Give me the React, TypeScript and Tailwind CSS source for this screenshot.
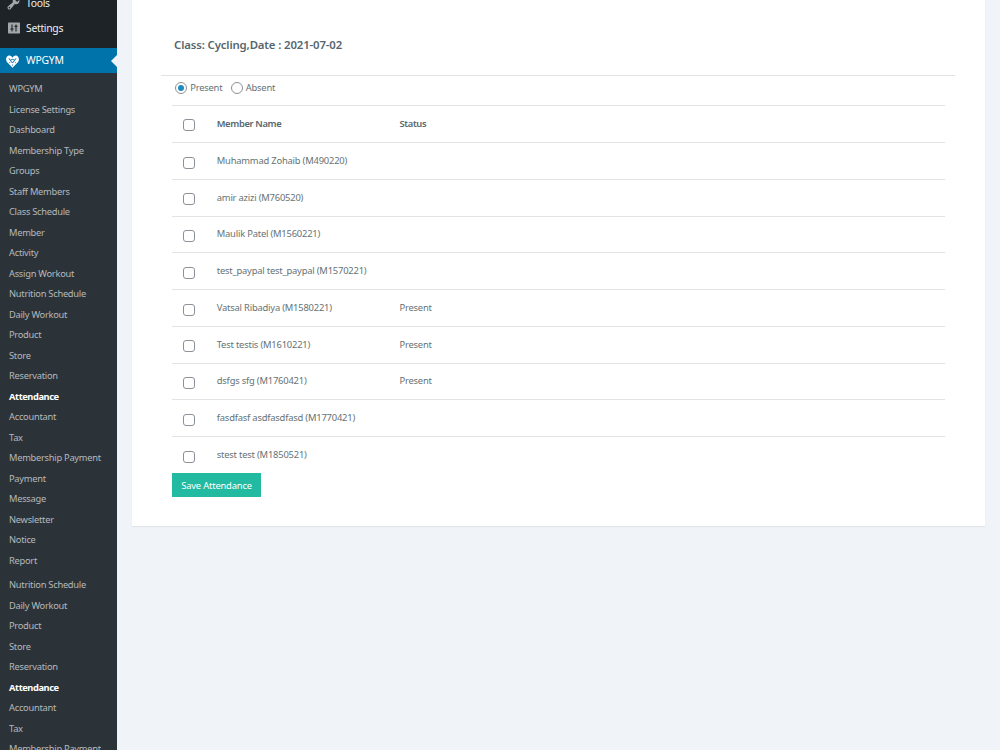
import React from "react";

const menu = ["WPGYM", "License Settings", "Dashboard", "Membership Type", "Groups", "Staff Members", "Class Schedule", "Member", "Activity", "Assign Workout", "Nutrition Schedule", "Daily Workout", "Product", "Store", "Reservation", "Attendance", "Accountant", "Tax", "Membership Payment", "Payment", "Message", "Newsletter", "Notice", "Report"];
const more = ["Nutrition Schedule", "Daily Workout", "Product", "Store", "Reservation", "Attendance", "Accountant", "Tax", "Membership Payment"];
const members = [
  ["Muhammad Zohaib (M490220)", ""],
  ["amir azizi (M760520)", ""],
  ["Maulik Patel (M1560221)", ""],
  ["test_paypal test_paypal (M1570221)", ""],
  ["Vatsal Ribadiya (M1580221)", "Present"],
  ["Test testis (M1610221)", "Present"],
  ["dsfgs sfg (M1760421)", "Present"],
  ["fasdfasf asdfasdfasd (M1770421)", ""],
  ["stest test (M1850521)", ""],
];

function Items({ items }: { items: string[] }) {
  return (
    <ul>
      {items.map((m) => (
        <li key={m} className="flex h-[20.5px] items-center pl-[9px] text-[9.3px]">
          <span className={m === "Attendance" ? "font-bold text-white tracking-[-0.42px]" : "text-[#b4b9be] tracking-[-0.26px]"}>{m}</span>
        </li>
      ))}
    </ul>
  );
}

function Box() {
  return <span className="ml-[11px] mt-[2.25px] size-[12px] shrink-0 rounded-[3px] border border-[#8c9199]" />;
}

function Row({ name, status, head }: { name: string; status: string; head?: boolean }) {
  return (
    <div className={`flex h-[36.75px] items-center border-t border-[#e2e3e4] ${head ? "font-semibold text-[#56666d] tracking-[-0.35px]" : "pt-px text-[#667375] tracking-[-0.2px]"}`}>
      <Box />
      <span className="-mt-px ml-[21.75px] w-[182.75px] whitespace-nowrap">{name}</span>
      <span className="-mt-px">{status}</span>
    </div>
  );
}

export default function App() {
  return (
    <div className="flex h-[750px] w-[1000px] overflow-hidden bg-[#f0f3f8] font-['Noto_Sans',sans-serif] text-[9.4px] leading-[14px]">
      <aside className="h-full w-[117px] shrink-0 overflow-hidden whitespace-nowrap bg-[#2c3338]">
        <div className="h-[48px] overflow-hidden bg-[#1d2327] text-[10.4px] text-[#eeeff0] tracking-[-0.3px]">
          <div className="-mt-[10px] flex h-[26px] items-center gap-[5px] pl-[6px]">
            <svg viewBox="0 0 20 20" className="size-[15px]" fill="#a2a7aa"><path d="M16.68 9.77c-1.34 1.34-3.3 1.67-4.95.99l-5.41 6.52c-.99.99-2.59.99-3.58 0s-.99-2.59 0-3.57l6.52-5.42c-.68-1.65-.35-3.61.99-4.95 1.28-1.28 3.12-1.62 4.72-1.06l-2.89 2.89 2.82 2.82 2.86-2.87c.53 1.58.18 3.39-1.08 4.65zM3.81 16.21c.4.39 1.04.39 1.43 0 .4-.4.4-1.04 0-1.43-.39-.4-1.03-.4-1.43 0-.39.39-.39 1.03 0 1.43z" /></svg>
            <span>Tools</span>
          </div>
          <div className="flex h-[24px] items-center gap-[6px] pl-[8px]">
            <svg viewBox="0 0 12 12" className="size-[12px]"><rect y=".5" width="12" height="11" rx=".7" fill="#a2a7aa" /><path d="M4 2.500v7M8 2.500v7M2.300 7h3.400M6.300 4.300h3.400" fill="none" stroke="#1d2327" strokeWidth="1.1" /></svg>
            <span>Settings</span>
          </div>
        </div>
        <div className="relative flex h-[25px] items-center gap-[7px] bg-[#0073aa] pl-[6px] text-[10.4px] tracking-[-0.25px] text-white">
          <svg viewBox="0 0 13 13" className="mt-px size-[13px]"><path d="M6.500 12.800L.9 6.900C-.5 5 0 2 1.800 1 3.500.1 5.400.8 6.500 2.800 7.600.8 9.500.1 11.200 1c1.800 1 2.300 4 .9 5.900z" fill="#fff" /><path d="M3 3.300L4.300 5.300 6.500 8 8.700 5.300 10 3.300M4.300 5.300L6.500 4.300 8.700 5.300" fill="none" stroke="#0073aa" strokeWidth="1" /><path d="M3 8.200l1.200-1.200M10 8.200L8.800 7M6.500 9.400v1.400" stroke="#0073aa" strokeWidth=".7" /></svg>
          <span className="-mt-px">WPGYM</span>
          <svg viewBox="0 0 6 12" className="absolute right-0 top-[7px] h-[12px] w-[6px]" fill="#f0f3f8"><path d="M6 0v12L0 6z" /></svg>
        </div>
        <nav className="pt-[6px]">
          <Items items={menu} />
          <div className="h-[4px]" />
          <Items items={more} />
        </nav>
      </aside>
      <main className="ml-[14.5px] h-[526px] w-[853.75px] bg-white pt-[37px] shadow-[0_1px_1px_rgba(0,0,0,0.06)]">
        <h3 className="ml-[42.5px] h-[16px] text-[11.4px] font-semibold leading-[16px] text-[#56666d] tracking-[-0.14px]"><span>Class: Cycling,Date : 2021-07-02</span></h3>
        <div className="ml-[29.5px] mt-[22px] w-[794px] border-t border-[#e2e3e4]" />
        <div className="ml-[40.5px] w-[773px]">
          <div className="flex h-[29.25px] items-start pl-[3.25px] pt-[6px] text-[#667375] tracking-[-0.22px]">
            <span className="flex size-[12px] items-center justify-center rounded-full border border-[#8c9199]"><span className="size-[6px] rounded-full bg-[#1e8cbe]" /></span>
            <span className="-mt-px ml-[3px] w-[40.5px]">Present</span>
            <span className="size-[12px] rounded-full border border-[#8c9199]" />
            <span className="-mt-px ml-[3px]">Absent</span>
          </div>
          <Row head name="Member Name" status="Status" />
          {members.map(([n, s]) => <Row key={n} name={n} status={s} />)}
          <button className="mt-[0.5px] flex h-[24px] w-[89px] items-center justify-center whitespace-nowrap bg-[#22baa0] pt-px text-white tracking-[-0.18px]"><span>Save Attendance</span></button>
        </div>
      </main>
    </div>
  );
}
